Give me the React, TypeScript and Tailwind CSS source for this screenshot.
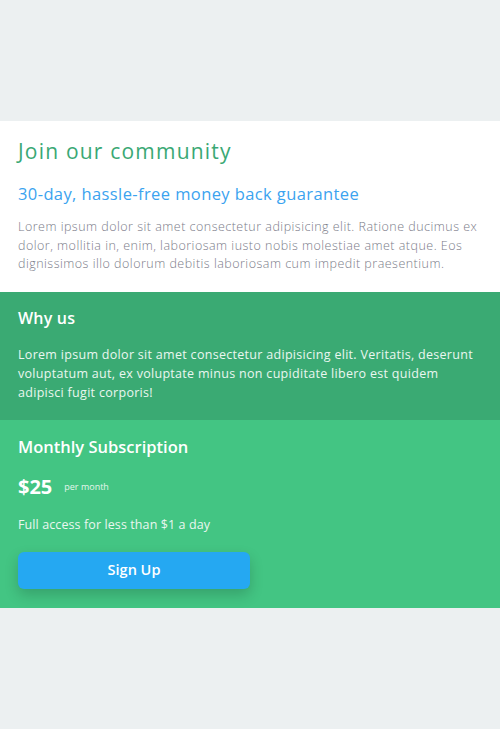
const App = () => {
  return (
    <div className="min-h-screen bg-[#ecf0f1] pt-[121px] font-['Open_Sans',sans-serif]">
      <div className="w-full">
        {/* Top */}
        <div className="bg-white px-[18px] pt-[15px] pb-[18px]">
          <h1 className="text-[21px] leading-[30px] font-normal tracking-[1.2px] text-[#3aa874]">Join our community</h1>
          <h2 className="mt-[16px] text-[16.5px] leading-[24px] font-normal tracking-[0.4px] text-[#3ba3ef]">
            30-day, hassle-free money back guarantee
          </h2>
          <p className="mt-[12px] text-[12.5px] leading-[18.5px] font-light tracking-[0.48px] text-[#7b7c89]">
            Lorem ipsum dolor sit amet consectetur adipisicing elit. Ratione ducimus ex dolor, mollitia in, enim,
            laboriosam iusto nobis molestiae amet atque. Eos dignissimos illo dolorum debitis laboriosam cum impedit
            praesentium.
          </p>
        </div>

        {/* Why us */}
        <div className="bg-[#3aaa73] px-[18px] pt-[14px] pb-[18px] text-white">
          <h3 className="text-[16px] leading-[24px] font-semibold tracking-[0.2px]">Why us</h3>
          <p className="mt-[15px] text-[12.5px] leading-[19px] tracking-[0.3px] text-[#eaf7f0]">
            Lorem ipsum dolor sit amet consectetur adipisicing elit. Veritatis, deserunt voluptatum aut, ex voluptate
            minus non cupiditate libero est quidem adipisci fugit corporis!
          </p>
        </div>

        {/* Subscription */}
        <div className="bg-[#43c583] px-[18px] pt-[14px] pb-[19px] text-white">
          <h3 className="text-[16.5px] leading-[26px] font-semibold">Monthly Subscription</h3>
          <div className="mt-[13px] flex items-center gap-[12px] h-[28px]">
            <span className="text-[20px] font-bold">$25</span>
            <span className="text-[9px] text-[#e3f6ec]">per month</span>
          </div>
          <p className="mt-[14px] text-[12.5px] leading-[20px] tracking-[0.1px] text-[#eaf7f0]">Full access for less than $1 a day</p>
          <button className="mt-[17px] h-[37px] w-[232px] rounded-[6px] bg-[#25a8f2] text-[14.5px] font-semibold text-white shadow-[0_6px_14px_rgba(0,0,0,0.18)]">
            Sign Up
          </button>
        </div>
      </div>
    </div>
  )
}

export default App
